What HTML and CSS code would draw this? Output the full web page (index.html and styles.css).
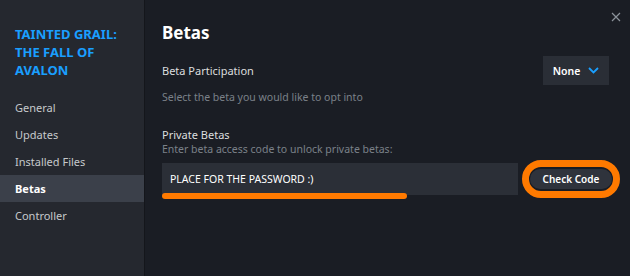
FILE: index.html
```html
<!DOCTYPE html>
<html lang="en">
  <head>
    <meta charset="UTF-8" />
    <meta name="viewport" content="width=device-width, initial-scale=1.0" />
    <title>Properties - Betas</title>
    <link rel="stylesheet" href="styles.css">
  </head>
  <body>
    <div class="window">
      <div class="sidebar">
        <div class="gameTitle">TAINTED GRAIL:<br />THE FALL OF<br />AVALON</div>
        <div class="navItem">General</div>
        <div class="navItem">Updates</div>
        <div class="navItem">Installed Files</div>
        <div class="navItem active">Betas</div>
        <div class="navItem">Controller</div>
      </div>

      <div class="main">
        <div class="closeBtn">
          <svg width="10" height="10" viewBox="0 0 10 10">
            <path d="M1 1L9 9M9 1L1 9" stroke="#8b929a" stroke-width="1.2" />
          </svg>
        </div>
        <h1 class="pageTitle">Betas</h1>

        <div class="row">
          <span class="label">Beta Participation</span>
          <div class="dropdown">
            None
            <svg width="11" height="7" viewBox="0 0 11 7">
              <path d="M1 1L5.5 5.5L10 1" stroke="#1a9fff" stroke-width="1.8" fill="none" />
            </svg>
          </div>
        </div>
        <div class="hint">Select the beta you would like to opt into</div>

        <div class="label privLabel">Private Betas</div>
        <div class="hint">Enter beta access code to unlock private betas:</div>
        <div class="codeRow">
          <div class="codeInput">
            PLACE FOR THE PASSWORD :)
            <span class="markLine"></span>
          </div>
          <div class="ring">
            <div class="checkBtn">Check Code</div>
          </div>
        </div>
      </div>
    </div>
  </body>
</html>
```
FILE: styles.css
```css
html, body {
  margin: 0;
  padding: 0;
}
body {
  font-family: "Noto Sans", "Open Sans", sans-serif;
  background-color: #1a1d24;
}
.window {
  display: flex;
  width: 630px;
  height: 276px;
  overflow: hidden;
}
.sidebar {
  flex-shrink: 0;
  width: 144px;
  background-color: #25282f;
  border-right: 1px solid #14161b;
  padding-top: 25px;
}
.gameTitle {
  color: #1a9fff;
  font-weight: 700;
  font-size: 13px;
  line-height: 18px;
  padding: 0 15px;
  margin-bottom: 15px;
}
.navItem {
  color: #c5c8cc;
  font-size: 11px;
  height: 27px;
  line-height: 27px;
  padding-left: 15px;
}
.navItem.active {
  background-color: #3b404a;
  color: #ffffff;
  font-weight: 700;
}
.main {
  flex: 1;
  min-width: 0;
  position: relative;
  padding: 0 10px 0 17px;
  background-color: #1a1d24;
}
.closeBtn {
  position: absolute;
  top: 5px;
  right: 9px;
}
.pageTitle {
  margin: 21px 0 0 0;
  color: #ffffff;
  font-size: 17px;
  line-height: 24px;
  font-weight: 700;
}
.row {
  display: flex;
  align-items: center;
  justify-content: space-between;
  margin-top: 11px;
  padding-right: 11px;
}
.label {
  color: #dcdedf;
  font-size: 11px;
}
.dropdown {
  width: 66px;
  height: 29px;
  background-color: #2a2e36;
  color: #ffffff;
  font-size: 10.5px;
  font-weight: 600;
  display: flex;
  align-items: center;
  justify-content: center;
  gap: 8px;
}
.hint {
  color: #7b8189;
  font-size: 10.5px;
  line-height: 15px;
}
.row + .hint {
  margin-top: 5px;
}
.privLabel {
  margin-top: 22px;
  line-height: 15px;
}
.codeRow {
  display: flex;
  align-items: center;
  margin-top: 3px;
}
.codeInput {
  position: relative;
  flex-shrink: 0;
  width: 348px;
  height: 32px;
  line-height: 32px;
  background-color: #2b2f37;
  color: #ffffff;
  font-size: 10.5px;
  padding-left: 8px;
}
.markLine {
  position: absolute;
  left: 0;
  top: 30px;
  width: 245px;
  height: 6px;
  border-radius: 3px;
  background-color: #ff7a00;
}
.ring {
  flex-shrink: 0;
  margin-left: 4px;
  border: 7px solid #ff7a00;
  border-radius: 19px;
  padding: 2px 1px;
  background-color: #1a1d24;
}
.checkBtn {
  width: 82px;
  height: 20px;
  line-height: 20px;
  border-radius: 10px;
  background-color: #2f333c;
  color: #ffffff;
  font-size: 10px;
  font-weight: 600;
  text-align: center;
}
```
